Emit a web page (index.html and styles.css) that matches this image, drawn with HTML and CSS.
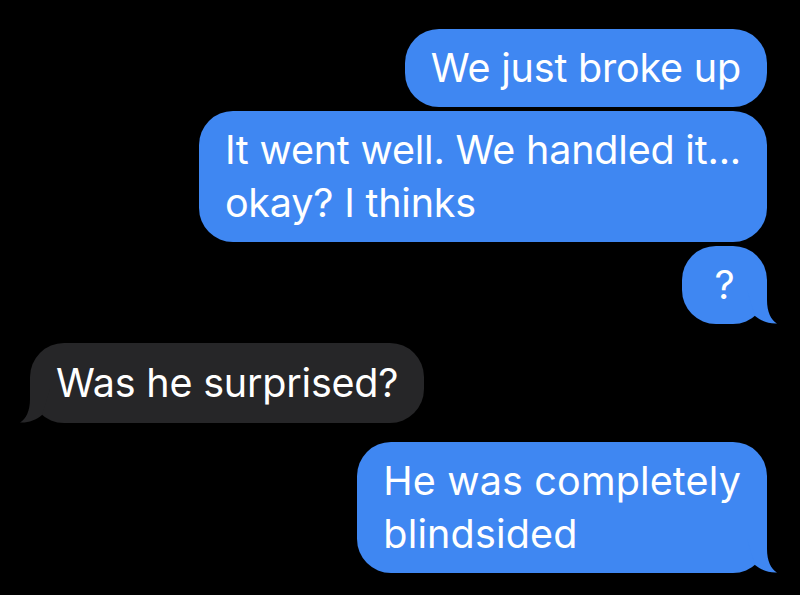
FILE: index.html
```html
<!DOCTYPE html>
<html>
<head>
<meta charset="utf-8">
<link rel="stylesheet" href="styles.css">
</head>
<body>
<div class="thread">
  <div class="row sent">
    <div class="bubble blue">We just broke up</div>
  </div>
  <div class="row sent">
    <div class="bubble blue">It went well. We handled it...<br>okay? I thinks</div>
  </div>
  <div class="row sent">
    <div class="bubble blue short">?
      <svg class="tail tail-right" width="30" height="34" viewBox="0 0 30 34"><path d="M0 0 L20 0 L20 10 C20 22 24 30 30 33.5 C22 34 14 31 8 26 Z"/></svg>
    </div>
  </div>
  <div class="row received group-start">
    <div class="bubble gray">Was he surprised?
      <svg class="tail tail-left" width="30" height="34" viewBox="0 0 30 34"><path d="M0 0 L20 0 L20 10 C20 22 24 30 30 33.5 C22 34 14 31 8 26 Z"/></svg>
    </div>
  </div>
  <div class="row sent group-start">
    <div class="bubble blue wide">He was completely<br>blindsided
      <svg class="tail tail-right" width="30" height="34" viewBox="0 0 30 34"><path d="M0 0 L20 0 L20 10 C20 22 24 30 30 33.5 C22 34 14 31 8 26 Z"/></svg>
    </div>
  </div>
</div>
</body>
</html>
```

FILE: styles.css
```css
html, body {
  margin: 0;
  padding: 0;
  background: #000;
}
body {
  width: 800px;
  height: 595px;
  overflow: hidden;
  font-family: Inter, "Noto Sans", sans-serif;
}
.thread {
  display: flex;
  flex-direction: column;
  gap: 4px;
  padding: 29px 33px 0 30px;
}
.row {
  display: flex;
}
.row.sent {
  justify-content: flex-end;
}
.row.received {
  justify-content: flex-start;
}
.group-start {
  margin-top: 15px;
}
.bubble {
  position: relative;
  font-size: 39.5px;
  line-height: 53px;
  color: #fff;
  padding: 12.5px 26px;
  border-radius: 34px;
  letter-spacing: -0.2px;
}
.bubble.blue {
  background: #3f87f2;
  fill: #3f87f2;
}
.bubble.gray {
  background: #262628;
  fill: #262628;
  padding: 13.5px 26px;
}
.bubble.wide {
  letter-spacing: 0.15px;
}
.bubble.short {
  min-width: 33px;
  text-align: center;
}
.tail {
  position: absolute;
  bottom: 0;
  display: block;
}
.tail-right {
  right: -10px;
}
.tail-left {
  left: -10px;
  transform: scaleX(-1);
}
.tail path {
  fill: inherit;
}
```
